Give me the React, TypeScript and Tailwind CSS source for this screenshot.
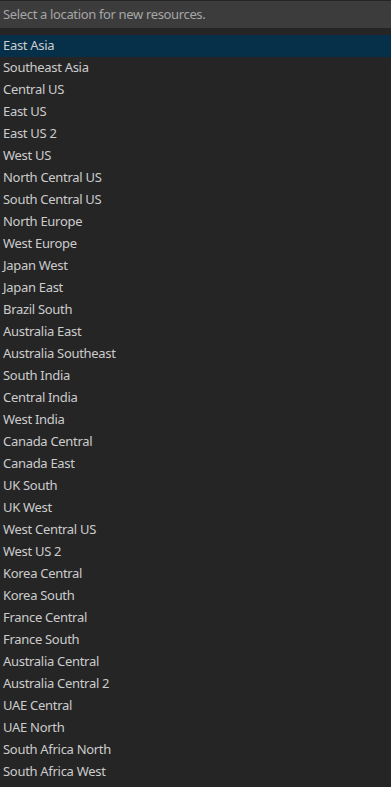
const regions = [
  "East Asia",
  "Southeast Asia",
  "Central US",
  "East US",
  "East US 2",
  "West US",
  "North Central US",
  "South Central US",
  "North Europe",
  "West Europe",
  "Japan West",
  "Japan East",
  "Brazil South",
  "Australia East",
  "Australia Southeast",
  "South India",
  "Central India",
  "West India",
  "Canada Central",
  "Canada East",
  "UK South",
  "UK West",
  "West Central US",
  "West US 2",
  "Korea Central",
  "Korea South",
  "France Central",
  "France South",
  "Australia Central",
  "Australia Central 2",
  "UAE Central",
  "UAE North",
  "South Africa North",
  "South Africa West",
];

export default function App() {
  return (
    <div className="min-h-screen w-full bg-[#252526] pt-px font-['Noto_Sans',sans-serif] text-[13px]">
      {/* Quick pick input */}
      <div className="h-[27px] bg-[#3c3c3c] flex items-center px-[3px]">
        <input
          className="w-full bg-transparent outline-none text-[#cccccc] placeholder:text-[#a6a6a6] tracking-[-0.35px]"
          placeholder="Select a location for new resources."
        />
      </div>

      {/* List */}
      <ul className="mt-[7px]">
        {regions.map((r, i) => (
          <li
            key={r}
            className={`h-[22px] flex items-center px-[3px] text-[#cccccc] tracking-[-0.3px] ${
              i === 0 ? "bg-[#062f4a]" : ""
            }`}
          >
            {r}
          </li>
        ))}
      </ul>
    </div>
  );
}
